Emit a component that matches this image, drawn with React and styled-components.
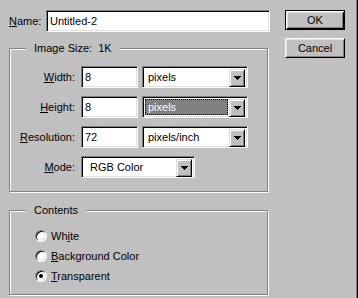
import React from 'react'
import styled, { createGlobalStyle, css } from 'styled-components';

const GlobalStyle = createGlobalStyle`
  html, body {
    margin: 0;
    padding: 0;
    background: #c0c0c0;
  }
  body {
    font-family: "Liberation Sans", Arial, sans-serif;
    font-size: 11px;
    color: #000;
  }
`;

const sunken = css`
  box-sizing: border-box;
  background: #fff;
  border: 1px solid;
  border-color: #808080 #fff #fff #808080;
  box-shadow: inset 1px 1px 0 #000, inset -1px -1px 0 #dfdfdf;
`;

const Dialog = styled.div`
  width: 358px;
  height: 298px;
  box-sizing: border-box;
  border-right: 1px solid #000;
  box-shadow: inset -1px 0 0 #808080;
  padding: 10px 0 0 9px;
  display: grid;
  grid-template-columns: 261px 60px;
  column-gap: 15px;
  align-items: start;
`;

const Column = styled.div`
  display: flex;
  flex-direction: column;
`;

const NameRow = styled.div`
  display: flex;
  align-items: center;
  justify-content: space-between;
  height: 22px;
`;

const Label = styled.span`
  white-space: nowrap;
`;

const TextField = styled.div`
  ${sunken};
  width: ${p => p.$w}px;
  height: 22px;
  padding-left: 3px;
  display: flex;
  align-items: center;
`;

const Group = styled.div`
  position: relative;
  box-sizing: border-box;
  width: 259px;
  height: ${p => p.$h}px;
  margin-top: ${p => p.$mt}px;
  border: 1px solid #808080;
  box-shadow: inset 1px 1px 0 #fff, 1px 1px 0 #fff;
  padding: ${p => p.$pad};
`;

const Caption = styled.span`
  position: absolute;
  top: -8px;
  left: 16px;
  padding: 0 8px;
  line-height: 14px;
  background: #c0c0c0;
  white-space: pre;
`;

const FieldGrid = styled.div`
  display: grid;
  grid-template-columns: 65px auto;
  grid-auto-rows: 22px;
  column-gap: 6px;
  row-gap: 8px;
  align-items: center;
`;

const RowLabel = styled.span`
  text-align: right;
  white-space: nowrap;
`;

const Pair = styled.div`
  display: flex;
  gap: 4px;
`;

const Select = styled.div`
  ${sunken};
  width: ${p => p.$w}px;
  height: 22px;
  padding: 2px;
  display: flex;
`;

const SelectValue = styled.div`
  flex: 1;
  display: flex;
  align-items: center;
  padding-left: ${p => p.$indent}px;
  margin-right: 1px;
  ${p => p.$focused && css`
    background: #808080;
    color: #fff;
    outline: 1px dotted #000;
    outline-offset: -1px;
  `}
`;

const DropButton = styled.div`
  box-sizing: border-box;
  width: 16px;
  height: 18px;
  background: #c0c0c0;
  border: 1px solid;
  border-color: #dfdfdf #000 #000 #dfdfdf;
  box-shadow: inset 1px 1px 0 #fff, inset -1px -1px 0 #808080;
  display: flex;
  align-items: center;
  justify-content: center;
`;

const RadioList = styled.div`
  display: flex;
  flex-direction: column;
`;

const RadioRow = styled.div`
  display: flex;
  align-items: center;
  gap: 4px;
  height: 20px;
`;

const RadioDot = styled.span`
  position: relative;
  box-sizing: border-box;
  width: 12px;
  height: 12px;
  border-radius: 50%;
  background: #fff;
  border: 1px solid;
  border-color: #808080 #fff #fff #808080;
  box-shadow: inset 1px 1px 0 #000, inset -1px -1px 0 #dfdfdf;

  &::after {
    content: "";
    display: ${p => (p.$checked ? 'block' : 'none')};
    position: absolute;
    left: 3px;
    top: 3px;
    width: 4px;
    height: 4px;
    border-radius: 50%;
    background: #000;
  }
`;

const ButtonStack = styled.div`
  display: flex;
  flex-direction: column;
  gap: 8px;
`;

const Button = styled.div`
  box-sizing: border-box;
  width: 60px;
  height: 20px;
  display: flex;
  align-items: center;
  justify-content: center;
  background: #c0c0c0;
  border: 1px solid;
  border-color: #fff #000 #000 #fff;
  box-shadow: inset 1px 1px 0 #dfdfdf, inset -1px -1px 0 #808080;
  ${p => p.$default && css`
    border-color: #000;
    box-shadow: inset 1px 1px 0 #fff, inset -1px -1px 0 #000,
      inset 2px 2px 0 #dfdfdf, inset -2px -2px 0 #808080;
  `}
`;

function Arrow() {
  return (
    <svg width="7" height="4" viewBox="0 0 7 4" shapeRendering="crispEdges">
      <polygon points="0,0 7,0 3.5,4" fill="#000" />
    </svg>
  )
}

function Dropdown({ w, value, indent = 3, focused }) {
  return (
    <Select $w={w}>
      <SelectValue $indent={indent} $focused={focused}>{value}</SelectValue>
      <DropButton><Arrow /></DropButton>
    </Select>
  )
}

const rows = [
  { key: 'W', rest: 'idth:', value: '8', unit: 'pixels' },
  { key: 'H', rest: 'eight:', value: '8', unit: 'pixels', focused: true },
  { key: 'R', rest: 'esolution:', value: '72', unit: 'pixels/inch' },
];

export default function App() {
  return (
    <>
      <GlobalStyle />
      <Dialog>
        <Column>
          <NameRow>
            <Label><u>N</u>ame:</Label>
            <TextField $w={224}>Untitled-2</TextField>
          </NameRow>

          <Group $h={144} $mt={16} $pad="17px 0 0 0">
            <Caption>{'Image Size:  1K'}</Caption>
            <FieldGrid>
              {rows.map(r => (
                <React.Fragment key={r.key}>
                  <RowLabel><u>{r.key}</u>{r.rest}</RowLabel>
                  <Pair>
                    <TextField $w={57}>{r.value}</TextField>
                    <Dropdown w={106} value={r.unit} focused={r.focused} />
                  </Pair>
                </React.Fragment>
              ))}
              <RowLabel><u>M</u>ode:</RowLabel>
              <Pair>
                <Dropdown w={114} value="RGB Color" indent={6} />
              </Pair>
            </FieldGrid>
          </Group>

          <Group $h={85} $mt={18} $pad="15px 0 0 25px">
            <Caption>Contents</Caption>
            <RadioList>
              <RadioRow><RadioDot /><span>Wh<u>i</u>te</span></RadioRow>
              <RadioRow><RadioDot /><span><u>B</u>ackground Color</span></RadioRow>
              <RadioRow><RadioDot $checked /><span><u>T</u>ransparent</span></RadioRow>
            </RadioList>
          </Group>
        </Column>

        <ButtonStack>
          <Button $default>OK</Button>
          <Button>Cancel</Button>
        </ButtonStack>
      </Dialog>
    </>
  )
}
